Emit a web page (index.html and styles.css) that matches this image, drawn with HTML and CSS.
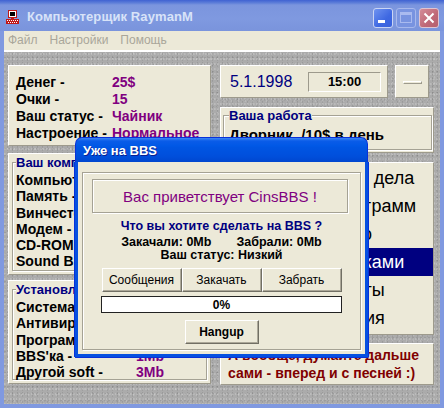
FILE: index.html
```html
<!DOCTYPE html>
<html lang="ru">
<head>
<meta charset="utf-8">
<title>Компьютерщик RaymanM</title>
<link rel="stylesheet" href="styles.css">
</head>
<body>
<div class="win">
  <div class="titlebar">
    <svg class="appicon" width="14" height="14" viewBox="0 0 14 14">
      <rect x="3" y="0" width="9" height="8" fill="#c01818"/>
      <rect x="4" y="1" width="7" height="6" fill="#fff"/>
      <rect x="5" y="2" width="5" height="4" fill="#000"/>
      <rect x="6" y="8" width="3" height="1" fill="#c01818"/>
      <rect x="1" y="9" width="13" height="5" fill="#c01818"/>
      <line x1="2" y1="10.5" x2="13" y2="10.5" stroke="#fff" stroke-dasharray="1 1"/>
      <line x1="3" y1="12.5" x2="12" y2="12.5" stroke="#fff" stroke-dasharray="1 1"/>
    </svg>
    <span class="title">Компьютерщик RaymanM</span>
    <div class="caps">
      <div class="cap cap-min"><svg width="18" height="18" viewBox="0 0 18 18"><rect x="4" y="11" width="7" height="3" fill="#fff"/></svg></div>
      <div class="cap cap-max"><svg width="18" height="18" viewBox="0 0 18 18"><rect x="3.5" y="3.5" width="11" height="10" fill="none" stroke="#a9baef"/><rect x="3" y="3" width="12" height="3" fill="#a9baef"/></svg></div>
      <div class="cap cap-close"><svg width="18" height="18" viewBox="0 0 18 18"><path d="M4.5 4.5 L13.5 13.5 M13.5 4.5 L4.5 13.5" stroke="#fff" stroke-width="2"/></svg></div>
    </div>
  </div>
  <div class="frame">
    <div class="menubar"><span>Файл</span><span>Настройки</span><span>Помощь</span></div>
    <div class="client">
      <div class="col col-left">
        <div class="panel p-stats">
          <div class="kv"><span class="k">Денег -</span><span class="v">25$</span></div>
          <div class="kv"><span class="k">Очки -</span><span class="v">15</span></div>
          <div class="kv"><span class="k">Ваш статус -</span><span class="v">Чайник</span></div>
          <div class="kv"><span class="k">Настроение -</span><span class="v">Нормальное</span></div>
        </div>
        <div class="panel p-comp">
          <fieldset class="group">
            <legend>Ваш компьютер</legend>
            <div class="rows">
              <div class="kv"><span class="k">Компьютер -</span><span class="v">286</span></div>
              <div class="kv"><span class="k">Память -</span><span class="v">1Mb</span></div>
              <div class="kv"><span class="k">Винчестер -</span><span class="v">40Mb</span></div>
              <div class="kv"><span class="k">Модем -</span><span class="v">2400</span></div>
              <div class="kv"><span class="k">CD-ROM -</span><span class="v">нет</span></div>
              <div class="kv"><span class="k">Sound Blaster -</span><span class="v">нет</span></div>
            </div>
          </fieldset>
        </div>
        <div class="panel p-soft">
          <fieldset class="group">
            <legend>Установленный soft</legend>
            <div class="rows">
              <div class="kv"><span class="k">Система -</span><span class="v">5Mb</span></div>
              <div class="kv"><span class="k">Антивирус -</span><span class="v">1Mb</span></div>
              <div class="kv"><span class="k">Программы -</span><span class="v">8Mb</span></div>
              <div class="kv"><span class="k">BBS'ка -</span><span class="v">1Mb</span></div>
              <div class="kv"><span class="k">Другой soft -</span><span class="v">3Mb</span></div>
            </div>
          </fieldset>
        </div>
      </div>
      <div class="col col-right">
        <div class="toprow">
          <div class="panel p-date"><span class="date">5.1.1998</span><span class="clock">15:00</span></div>
          <div class="panel p-mini"><span class="mini-bar"></span></div>
        </div>
        <div class="panel p-work">
          <fieldset class="group">
            <legend>Ваша работа</legend>
            <div class="job">Дворник. /10$ в день</div>
          </fieldset>
        </div>
        <div class="panel p-list">
          <ul class="menu">
            <li>Повседневные дела</li>
            <li>Установка программ</li>
            <li>Сходить в кино</li>
            <li class="sel">Возня с железками</li>
            <li>Бытовые заботы</li>
            <li>Другие действия</li>
          </ul>
        </div>
        <div class="panel p-note">А вообще, думайте дальше<br>сами - вперед и с песней :)</div>
      </div>
    </div>
  </div>
</div>

<div class="dialog">
  <div class="dlg-title">Уже на BBS</div>
  <div class="dlg-body">
    <div class="dlg-frame">
      <div class="welcome">Вас приветствует CinsBBS !</div>
      <div class="question">Что вы хотите сделать на BBS ?</div>
      <div class="traffic"><span>Закачали: 0Mb</span><span>Забрали: 0Mb</span></div>
      <div class="status">Ваш статус: Низкий</div>
      <div class="btnrow">
        <div class="btn">Сообщения</div>
        <div class="btn">Закачать</div>
        <div class="btn">Забрать</div>
      </div>
      <div class="progress">0%</div>
      <div class="btn hangup">Hangup</div>
    </div>
  </div>
</div>
</body>
</html>
```

FILE: styles.css
```css
* { box-sizing: border-box; }
html, body { margin: 0; padding: 0; }
body {
  width: 444px;
  height: 408px;
  overflow: hidden;
  position: relative;
  font-family: "Liberation Sans", Arial, sans-serif;
  background: #7f99e0;
}

.win {
  width: 444px;
  height: 408px;
  display: flex;
  flex-direction: column;
  background: #8099e0;
}

/* ---------- title bar (inactive XP) ---------- */
.titlebar {
  height: 31px;
  flex: none;
  display: flex;
  align-items: center;
  padding: 2px 5px 0 5px;
  background: linear-gradient(#3f62d2 0, #5f7fd9 3px, #7b95de 5px, #7f99e0 60%, #7a94dc 100%);
}
.appicon { flex: none; margin-top: 1px; }
.title {
  margin-left: 8px;
  color: #d8e3f8;
  font-weight: bold;
  font-size: 13px;
  letter-spacing: 0.1px;
}
.caps {
  margin-left: auto;
  display: flex;
  gap: 3px;
  margin-top: 3px;
}
.cap {
  width: 20px;
  height: 20px;
  border-radius: 3px;
  border: 1px solid #c9d4f4;
  display: flex;
  align-items: center;
  justify-content: center;
}
.cap-min { background: linear-gradient(135deg, #6f93f0, #3e68e2 60%, #3a62dc); }
.cap-max { background: #7893e0; border-color: #a7b8ec; }
.cap-close { background: linear-gradient(135deg, #d48c98, #bf6877 60%, #b55f6e); border-color: #dfc4d0; }

/* ---------- frame ---------- */
.frame {
  flex: 1;
  display: flex;
  flex-direction: column;
  padding: 0 4px 4px 4px;
}
.menubar {
  height: 21px;
  flex: none;
  background: #ece9d8;
  border-bottom: 2px solid #fff;
  display: flex;
  align-items: center;
  gap: 12px;
  padding: 0 0 2px 4px;
  font-size: 12px;
  color: #a9a69a;
}

.client {
  flex: 1;
  display: flex;
  gap: 9px;
  padding: 13px 6px 0 4px;
  background-color: #ababab;
  background-image:
    radial-gradient(circle at 30% 40%, rgba(255,255,255,.22) 0 0.6px, transparent 1px),
    radial-gradient(circle at 70% 60%, rgba(0,0,0,.10) 0 0.6px, transparent 1px),
    radial-gradient(circle at 50% 20%, rgba(255,255,255,.16) 0 0.7px, transparent 1.2px),
    radial-gradient(circle at 20% 80%, rgba(0,0,0,.09) 0 0.7px, transparent 1.2px);
  background-size: 3px 5px, 5px 3px, 7px 6px, 4px 7px;
}

.col { display: flex; flex-direction: column; }
.col-left { width: 203px; }
.col-right { width: 214px; }

.panel {
  background: #ece9d8;
  border: 1px solid;
  border-color: #ffffff #9d9a8c #9d9a8c #ffffff;
}

/* ---------- key/value rows ---------- */
.kv { display: flex; white-space: nowrap; }
.k { color: #000; }
.v { color: #800080; }

.p-stats {
  height: 81px;
  padding: 8px 0 0 7px;
  font-weight: bold;
  font-size: 14px;
  line-height: 17px;
}
.p-stats .k { width: 96px; }

.group {
  margin: 0 3px;
  padding: 0 0 0 3px;
  min-width: 0;
  border: 1px solid #a5a294;
  box-shadow: inset 1px 1px 0 #fff, 1px 1px 0 #fff;
}
.group legend {
  padding: 0;
  background: #ece9d8;
  color: #000080;
  font-weight: bold;
  font-size: 13px;
  line-height: 15px;
}

.p-comp { height: 122px; margin-top: 7px; padding-top: 1px; }
.p-comp .group { height: 116px; }
.p-soft { height: 104px; margin-top: 5px; padding-top: 1px; }
.p-soft .group { height: 98px; }

.rows {
  padding-top: 2px;
  font-weight: bold;
  font-size: 14px;
  line-height: 16.3px;
}
.p-comp .k { width: 118px; }
.p-soft .k { width: 120px; }

/* ---------- right column ---------- */
.toprow { display: flex; gap: 7px; height: 33px; }
.p-date {
  width: 168px;
  display: flex;
  align-items: center;
  padding-left: 9px;
}
.date { color: #000080; font-size: 16px; }
.clock {
  margin-left: auto;
  margin-right: 6px;
  width: 73px;
  height: 20px;
  display: flex;
  align-items: center;
  justify-content: center;
  font-weight: bold;
  font-size: 13px;
  border: 1px solid;
  border-color: #9d9a8c #ffffff #ffffff #9d9a8c;
}
.p-mini {
  width: 34px;
  display: flex;
  align-items: center;
  justify-content: center;
}
.mini-bar {
  width: 19px;
  height: 3px;
  margin-top: 1px;
  border: 1px solid;
  border-color: #ffffff #9d9a8c #9d9a8c #ffffff;
}

.p-work { height: 46px; margin-top: 9px; padding-top: 0; }
.p-work .group { height: 42px; margin: 0 1px 0 2px; padding-left: 5px; }
.job { font-weight: bold; font-size: 15px; line-height: 16px; margin-top: 4px; }

.p-list { height: 173px; margin-top: 9px; padding-top: 1px; }
.menu { list-style: none; margin: 0; padding: 0; }
.menu li {
  height: 28px;
  line-height: 28px;
  padding-left: 24px;
  font-size: 18px;
  white-space: nowrap;
  overflow: hidden;
}
.menu li.sel { background: #000080; color: #fff; }

.p-note {
  height: 42px;
  margin-top: 8px;
  padding: 2px 0 0 7px;
  color: #800000;
  font-weight: bold;
  font-size: 14px;
  line-height: 18px;
  white-space: nowrap;
}

/* ---------- dialog (active XP window) ---------- */
.dialog {
  position: absolute;
  left: 75px;
  top: 137px;
  width: 293px;
  height: 220px;
  display: flex;
  flex-direction: column;
}
.dlg-title {
  height: 25px;
  flex: none;
  border-radius: 7px 7px 0 0;
  padding: 1px 0 0 7px;
  display: flex;
  align-items: center;
  color: #fff;
  font-weight: bold;
  font-size: 13px;
  text-shadow: 1px 1px 0 #0a1f90;
  background: linear-gradient(#3d86f5 0, #0a5ce8 3px, #0058e6 8px, #0055e2 40%, #004fdc 75%, #0046cf 100%);
  border: 1px solid #0831d9;
  border-bottom: none;
}
.dlg-body {
  flex: 1;
  background: #ece9d8;
  border: 3px solid #0650e0;
  border-top: none;
  box-shadow: -1px 0 0 #0831d9, 1px 0 0 #0831d9, 0 1px 0 #0831d9;
  padding: 10px 4px 4px 4px;
  display: flex;
}
.dlg-frame {
  flex: 1;
  border: 1px solid #a5a294;
  box-shadow: inset 1px 1px 0 #fff, 1px 1px 0 #fff;
  display: flex;
  flex-direction: column;
  align-items: center;
  padding-top: 6px;
}
.welcome {
  width: 256px;
  height: 34px;
  margin-left: -3px;
  display: flex;
  align-items: center;
  justify-content: center;
  color: #800080;
  font-size: 15px;
  border: 1px solid #a5a294;
  box-shadow: inset 1px 1px 0 #fff, 1px 1px 0 #fff;
}
.question {
  margin-top: 7px;
  color: #000080;
  font-weight: bold;
  font-size: 12.5px;
  line-height: 13px;
}
.traffic {
  margin-top: 3px;
  display: flex;
  gap: 25px;
  font-weight: bold;
  font-size: 12.5px;
  line-height: 13px;
}
.status {
  font-weight: bold;
  font-size: 12.5px;
  line-height: 13px;
}
.btnrow {
  margin-top: 6px;
  display: flex;
}
.btn {
  height: 24px;
  display: flex;
  align-items: center;
  justify-content: center;
  font-size: 12px;
  background: #ece9d8;
  border: 1px solid;
  border-color: #ffffff #716f64 #716f64 #ffffff;
  box-shadow: inset -1px -1px 0 #aca899;
}
.btnrow .btn { width: 80px; }
.progress {
  margin-top: 4px;
  width: 241px;
  height: 17px;
  background: #fff;
  border: 1px solid #222;
  display: flex;
  align-items: center;
  justify-content: center;
  font-weight: bold;
  font-size: 12px;
}
.hangup {
  margin-top: 7px;
  width: 74px;
  font-weight: bold;
}
```
